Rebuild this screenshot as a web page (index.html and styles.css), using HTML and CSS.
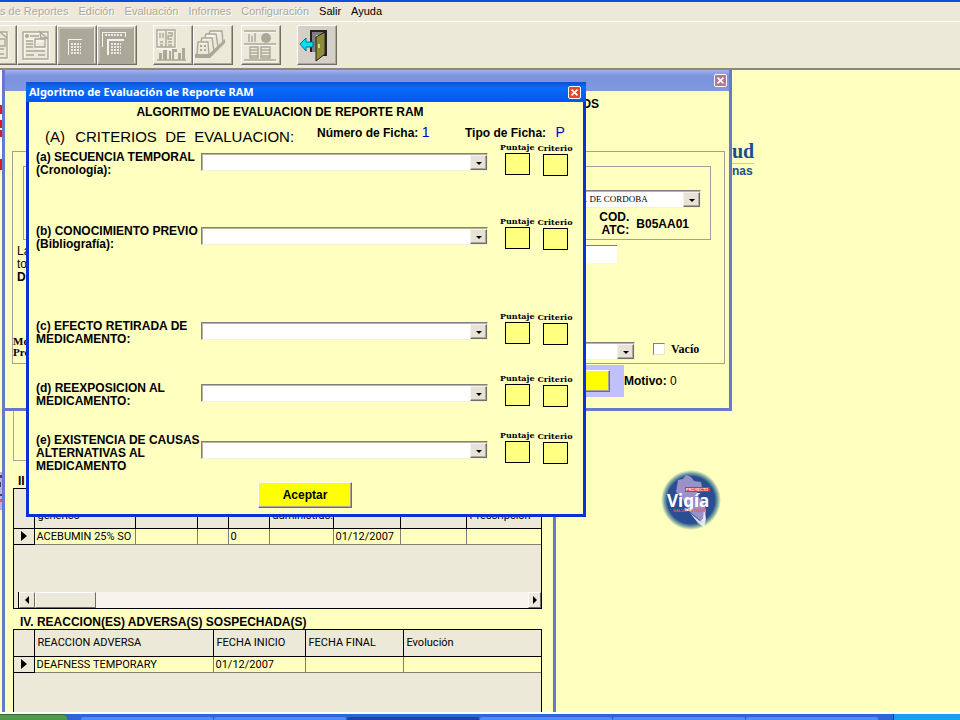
FILE: index.html
```
<!DOCTYPE html>
<html lang="es">
<head>
    <meta charset="UTF-8">
    <meta name="viewport" content="width=device-width, initial-scale=1.0">
    <title>Algoritmo de Evaluación de Reporte RAM</title>
    <link rel="stylesheet" href="styles.css">
</head>
<body>
    <nav class="menubar">
        <button disabled>s de Reportes</button>
        <button disabled>Edición</button>
        <button disabled>Evaluación</button>
        <button disabled>Informes</button>
        <button disabled>Configuración</button>
        <button>Salir</button>
        <button>Ayuda</button>
    </nav>

    <div class="toolbar">
        <button class="tool tool-cut" aria-label="Reporte" disabled>
            <svg viewBox="0 0 36 36"><path class="hi" d="M5 6h25v26h-25z"/><path class="lo" d="M4 5h25v26h-25zM7 8h12M22 5l7 6M7 14h8M7 18h8M7 22h19M7 27h19M19 12h8v7h-8z"/></svg>
        </button>
        <button class="tool" aria-label="Nuevo reporte" disabled>
            <svg viewBox="0 0 36 36"><path class="hi" d="M6 6h25v27h-25zM8 12h9M18 14h10v7h-10z"/><path class="lo" d="M5 5h25v27h-25zM12 9h9M22 5l7 6h-6zM8 14h7M8 17h7M8 20h7M8 24h19M8 28h8M20 28h7M17 12h10v8h-10z"/><circle class="fill" cx="9" cy="9" r="2"/></svg>
        </button>
        <button class="tool tool-dark" aria-label="Evaluar" disabled>
            <svg viewBox="0 0 36 36"><path class="edge" d="M1 35v-34h34"/><path class="light" d="M10 28v-16h14v1h-13v15z"/><path class="dots" d="M13 17h10M13 20h10M13 23h10M13 26h10"/></svg>
        </button>
        <button class="tool tool-dark" aria-label="Evaluar varios" disabled>
            <svg viewBox="0 0 36 36"><path class="edge" d="M1 35v-34h34"/><path class="light" d="M4 20v-15h24v5h-1v-4h-22v14zM9 28v-16h17v2h-15v14z"/><path class="dots" d="M7 8h18M13 17h10M13 20h10M13 23h10M13 26h10"/></svg>
        </button>
        <button class="tool tool-group" aria-label="Estadísticas" disabled>
            <svg viewBox="0 0 36 36"><path class="hi" d="M4 4h18v18h-18z"/><path class="lo" d="M3 3h18v17h-18zM12 4v16M6 6v5M9 6v5M14 6h4v3h-4v3h4M6 15h3M14 15h4M6 18h3M14 18h4M3 33h29"/><path class="fill" d="M5 26h3v7h-3zM9 23h4v10h-4zM15 24h2v9h-2zM18 22h5v3h-3v8h-2zM24 26h3v7h-3zM28 21h3v12h-3z"/></svg>
        </button>
        <button class="tool" aria-label="Fichero" disabled>
            <svg viewBox="0 0 36 36"><path class="hi" d="M5 16h10v13M8 12h10M12 9h10M16 6h10"/><path class="lo" d="M3 28l1-13h10l1 13M7 14l1-3h10l2 13M11 10l1-3h10l2 13M15 7l1-3h12l1 12"/><path class="fill" d="M6 18h2v2h-2zM10 18h2v2h-2zM6 22h2v2h-2zM10 22h2v2h-2zM1 27h14l16-15v4l-15 15h-15z"/></svg>
        </button>
        <button class="tool tool-single" aria-label="Informe" disabled>
            <svg viewBox="0 0 36 36"><path class="hi" d="M2 5h32M2 18h32M2 34h32"/><path class="lo" d="M2 4h32M2 17h32M2 33h32M7 7v8M10 9v6M13 6v9M8 20h8v11h-8zM19 20h9v11h-9zM8 23h8M8 26h8M8 29h8M19 23h9M19 26h9M19 29h9"/><circle class="fill" cx="24" cy="11" r="5"/></svg>
        </button>
        <button class="tool tool-exit" aria-label="Salir">
            <svg viewBox="0 0 36 36"><path fill="#222" d="M12 3h17v26h-7v-3h4v-19h-9v18h-5z"/><path fill="#808080" d="M14 5h11v3h-7v17h-4z"/><path fill="#8c8c3a" stroke="#222" d="M18 10l9-5v22l-9 7z"/><path fill="#d8d870" d="M20 17h2v4h-2z"/><path fill="#00e0f0" stroke="#007088" d="M2 17l6-6v4h7v5h-7v4z"/></svg>
        </button>
    </div>

    <main class="desktop">
        <svg class="edge-art" viewBox="0 0 3 440"><path fill="#fff" d="M0 0h3v101h-3z"/><path fill="#c22" d="M0 35h2v9h-2zM0 50h2v8h-2zM0 60h2v7h-2zM0 89h2v11h-2z"/><path fill="#b9b4dc" d="M0 402h2v38h-2z"/><path fill="#445" d="M0 405h2v3h-2zM0 412h1v5h-1zM0 424h2v2h-2z"/><path fill="#d57" d="M0 429h2v3h-2z"/></svg>

        <div class="brand">
            <div class="brand-name">ud</div>
            <div class="brand-sub">nas</div>
        </div>

        <svg class="vigia" viewBox="0 0 60 60" role="img" aria-label="Proyecto Vigía">
            <defs>
                <radialGradient id="halo">
                    <stop offset="0.78" stop-color="#26508a"/>
                    <stop offset="0.88" stop-color="#6f9a9e"/>
                    <stop offset="1" stop-color="#ffffc0"/>
                </radialGradient>
            </defs>
            <circle cx="30" cy="30" r="30" fill="url(#halo)"/>
            <circle cx="30" cy="30" r="24" fill="#2c4c94"/>
            <path fill="#9a90cc" d="M17 10l5-1 3-4 5 2 3 4 7 1 1 5-5 4 2 7 5 3 2 10-1 11-5-2-10-8-7-12-7-8 1-6z"/>
            <path fill="#fff" d="M29 43l10 8 3-2 1-10 2 10-2 8-6-4z" opacity="0.8"/>
            <rect x="24" y="17" width="25" height="5" fill="#e03028"/>
            <text x="25" y="21" class="vigia-small" fill="#fff">PROYECTO</text>
            <text x="6" y="37" class="vigia-name">Vigía</text>
            <text x="12" y="42" class="vigia-small" fill="#ff5040">SALUD Y VISIÓN</text>
        </svg>

        <section class="window report">
            <div class="report-box"></div>
            <h2 class="section-title">II</h2>
            <div class="grid-panel grid-drugs">
                <table>
                    <colgroup><col class="w-mark"><col class="w-name"><col class="w-62"><col class="w-31"><col class="w-41"><col class="w-64"><col class="w-67"><col class="w-66"><col></colgroup>
                    <thead>
                        <tr><th></th><th>genérico</th><th></th><th></th><th></th><th>adminístrac.</th><th></th><th></th><th>Prescripción</th></tr>
                    </thead>
                    <tbody>
                        <tr><td class="mark"><span class="tri"></span></td><td>ACEBUMIN 25% SO</td><td></td><td></td><td>0</td><td></td><td>01/12/2007</td><td></td><td></td></tr>
                    </tbody>
                </table>
                <div class="scrollbar">
                    <button class="scroll-btn" aria-label="Izquierda"><span class="tri tri-left"></span></button>
                    <div class="scroll-thumb"></div>
                    <button class="scroll-btn scroll-end" aria-label="Derecha"><span class="tri tri-small"></span></button>
                </div>
            </div>
            <h2 class="section-title title-reactions">IV. REACCION(ES) ADVERSA(S) SOSPECHADA(S)</h2>
            <div class="grid-panel grid-reactions">
                <table>
                    <colgroup><col class="w-mark"><col class="w-reaction"><col class="w-92"><col class="w-98"><col></colgroup>
                    <thead>
                        <tr><th></th><th>REACCION ADVERSA</th><th>FECHA INICIO</th><th>FECHA FINAL</th><th>Evolución</th></tr>
                    </thead>
                    <tbody>
                        <tr><td class="mark"><span class="tri"></span></td><td>DEAFNESS TEMPORARY</td><td>01/12/2007</td><td></td><td></td></tr>
                    </tbody>
                </table>
            </div>
        </section>

        <section class="window causality">
            <header class="titlebar">
                <button class="close" aria-label="Cerrar"><svg viewBox="0 0 13 13"><path d="M3 3l7 7M10 3l-7 7"/></svg></button>
            </header>
            <h2 class="causality-title">OS</h2>
            <div class="frame">
                <div class="inner-frame">
                    <div class="combo combo-lab">
                        <select aria-label="Laboratorio"><option>. DE CORDOBA</option></select>
                        <span class="combo-arrow"></span>
                    </div>
                    <div class="atc">
                        <span class="atc-label">COD.<br>ATC:</span>
                        <b>B05AA01</b>
                    </div>
                </div>
                <div class="took">
                    <label for="took">La<br>to<br><b>D</b></label>
                    <input type="text" id="took">
                </div>
                <div class="reason">
                    <label class="serif" for="reason">Mo<br>Pre</label>
                    <div class="combo">
                        <select id="reason"><option></option></select>
                        <span class="combo-arrow"></span>
                    </div>
                    <input type="checkbox" id="empty">
                    <label class="serif empty-label" for="empty">Vacío</label>
                </div>
            </div>
            <div class="actions">
                <div class="actions-bar"><button class="btn" aria-label="Algoritmo"></button></div>
                <div><b>Motivo:</b> 0</div>
            </div>
        </section>

        <section class="window dialog">
            <header class="titlebar">
                <span>Algoritmo de Evaluación de Reporte RAM</span>
                <button class="close" aria-label="Cerrar"><svg viewBox="0 0 13 13"><path d="M3 3l7 7M10 3l-7 7"/></svg></button>
            </header>
            <h1>ALGORITMO DE EVALUACION DE REPORTE RAM</h1>
            <div class="criteria-head">
                <h2><span>(A)</span> CRITERIOS&nbsp; DE&nbsp; EVALUACION:</h2>
                <div class="field">Número de Ficha: <span class="value">1</span></div>
                <div class="field">Tipo de Ficha: <span class="value value-type">P</span></div>
            </div>

            <div class="criterion row-a">
                <label class="question" for="crit-a">(a) SECUENCIA TEMPORAL (Cronología):</label>
                <div class="combo"><select id="crit-a"><option></option></select><span class="combo-arrow"></span></div>
                <label class="score">Puntaje<input type="text" readonly></label>
                <label class="score score-crit">Criterio<input type="text" readonly></label>
            </div>
            <div class="criterion row-b">
                <label class="question" for="crit-b">(b) CONOCIMIENTO PREVIO (Bibliografía):</label>
                <div class="combo"><select id="crit-b"><option></option></select><span class="combo-arrow"></span></div>
                <label class="score">Puntaje<input type="text" readonly></label>
                <label class="score score-crit">Criterio<input type="text" readonly></label>
            </div>
            <div class="criterion row-c">
                <label class="question" for="crit-c">(c) EFECTO RETIRADA DE MEDICAMENTO:</label>
                <div class="combo"><select id="crit-c"><option></option></select><span class="combo-arrow"></span></div>
                <label class="score">Puntaje<input type="text" readonly></label>
                <label class="score score-crit">Criterio<input type="text" readonly></label>
            </div>
            <div class="criterion row-d">
                <label class="question" for="crit-d">(d) REEXPOSICION AL MEDICAMENTO:</label>
                <div class="combo"><select id="crit-d"><option></option></select><span class="combo-arrow"></span></div>
                <label class="score">Puntaje<input type="text" readonly></label>
                <label class="score score-crit">Criterio<input type="text" readonly></label>
            </div>
            <div class="criterion row-e">
                <label class="question" for="crit-e">(e) EXISTENCIA DE CAUSAS ALTERNATIVAS AL MEDICAMENTO</label>
                <div class="combo"><select id="crit-e"><option></option></select><span class="combo-arrow"></span></div>
                <label class="score">Puntaje<input type="text" readonly></label>
                <label class="score score-crit">Criterio<input type="text" readonly></label>
            </div>

            <div class="dialog-foot"><button class="btn">Aceptar</button></div>
        </section>
    </main>

    <footer class="taskbar">
        <div class="start"></div>
        <div class="tasks">
            <div class="task"></div>
            <div class="task"></div>
            <div class="task task-active"></div>
            <div class="task"></div>
            <div class="task"></div>
            <div class="task"></div>
        </div>
        <div class="tray"></div>
    </footer>
</body>
</html>
```

FILE: styles.css
```
* {
    box-sizing: border-box;
}
body {
    margin: 0;
    height: 100vh;
    display: flex;
    flex-direction: column;
    overflow: hidden;
    background: #ffffc0;
    color: #000;
    font-family: "Liberation Sans", Arial, sans-serif;
    font-size: 12px;
    line-height: 13px;
}
h1, h2 {
    margin: 0;
    font-size: 12px;
}
button, input, select {
    margin: 0;
    padding: 0;
    border: none;
    border-radius: 0;
    font: inherit;
    color: inherit;
}

/* menu and toolbar */
.menubar {
    display: flex;
    gap: 10px;
    height: 22px;
    border-top: 2px solid #0a50d8;
    border-bottom: 1px solid #fff;
    background: #ece9d8;
    font-size: 11px;
}
.menubar button {
    background: none;
    white-space: nowrap;
}
.menubar button:disabled {
    color: #aca899;
    text-shadow: 1px 1px #fff;
}
.toolbar {
    display: flex;
    height: 48px;
    padding-top: 3px;
    background: #ece9d8;
    border-bottom: 2px solid #8c887c;
    overflow: hidden;
}
.tool {
    flex: none;
    width: 40px;
    height: 40px;
    background: #ece9d8;
    border: 1px solid;
    border-color: #fff #716f64 #716f64 #fff;
    box-shadow: inset -1px -1px #aca899;
}
.tool svg {
    display: block;
    width: 36px;
    height: 36px;
}
.tool-cut {
    margin-left: -23px;
}
.tool-dark svg {
    background: #aca899;
}
.tool-group {
    margin-left: 16px;
}
.tool-single {
    margin-left: 8px;
}
.tool-exit {
    margin-left: 16px;
    background: #d4d0c8;
}
.lo {
    fill: none;
    stroke: #aca899;
    stroke-width: 1.4;
}
.hi {
    fill: none;
    stroke: #fff;
}
.edge {
    fill: none;
    stroke: #dcd8c8;
}
.fill {
    fill: #aca899;
}
.light {
    fill: #f6f4ea;
}
.dots {
    fill: none;
    stroke: #fff;
    stroke-width: 1.5;
    stroke-dasharray: 2 1;
}

/* desktop */
.desktop {
    position: relative;
    flex: 1;
    overflow: hidden;
    border-bottom: 2px solid #fff;
}
.edge-art {
    position: absolute;
    left: 0;
    top: 0;
    width: 3px;
    height: 440px;
}
.brand {
    position: absolute;
    left: 732px;
    top: 69px;
    color: #1c4c90;
}
.brand-name {
    border-bottom: 1px solid #c8c8a8;
    font: bold 20px/24px "Liberation Serif", serif;
}
.brand-sub {
    font: bold 12px/14px "Liberation Sans", sans-serif;
}
.vigia {
    position: absolute;
    left: 661px;
    top: 400px;
    width: 60px;
    height: 60px;
}
.vigia-small {
    font: bold 4px "Liberation Sans", sans-serif;
}
.vigia-name {
    font: bold 17px "Noto Sans", sans-serif;
    fill: #fff;
}
.window {
    position: absolute;
    background: #ffffc0;
    border: 3px solid #6878cc;
}
.titlebar {
    display: flex;
    align-items: center;
    justify-content: space-between;
}
.close {
    width: 13px;
    height: 13px;
    margin-left: auto;
    border: 1px solid #fff;
    border-radius: 2px;
    background: #e0482c;
}
.close svg {
    display: block;
    width: 11px;
    height: 11px;
    fill: none;
    stroke: #fff;
    stroke-width: 2;
}

/* shared controls */
.combo {
    position: relative;
    height: 18px;
    border: 1px solid;
    border-color: #808080 #f4f1d8 #f4f1d8 #808080;
    box-shadow: inset 1px 1px #b8b5a8;
    background: #fff;
}
.combo select {
    display: block;
    width: 100%;
    height: 16px;
    appearance: none;
    background: none;
}
.combo-arrow {
    position: absolute;
    right: 0;
    top: 1px;
    width: 17px;
    height: 15px;
    background: #e6e3d6;
    border: 1px solid;
    border-color: #f4f2e8 #716f64 #716f64 #f4f2e8;
    box-shadow: inset -1px -1px #aca899;
    pointer-events: none;
}
.combo-arrow::after {
    content: "";
    display: block;
    width: 0;
    margin: 6px auto 0;
    border: solid transparent;
    border-width: 3px 3px 0;
    border-top-color: #000;
}
.btn {
    background: #ff0;
    border: 1px solid;
    border-color: #fff #716f64 #716f64 #fff;
    box-shadow: inset -1px -1px #aca899;
    font-weight: bold;
}
.serif {
    font-family: "Liberation Serif", serif;
    font-weight: bold;
}

/* report window */
.report {
    left: 2px;
    top: 0;
    width: 554px;
    bottom: 0;
    display: flex;
    flex-direction: column;
    border-top: none;
    border-bottom: none;
    padding: 0 11px 0 8px;
}
.report-box {
    height: 391px;
    border: 1px solid #a8a8a0;
}
.section-title {
    padding: 14px 0 0 5px;
}
.title-reactions {
    padding: 7px 0 0 7px;
}
.grid-panel {
    display: flex;
    flex-direction: column;
    justify-content: space-between;
    border: 1px solid #000;
    background: #ece9d8;
}
.grid-drugs {
    height: 121px;
}
.grid-reactions {
    flex: 1;
    border-bottom: none;
}
.grid-panel table {
    width: 100%;
    table-layout: fixed;
    border-collapse: collapse;
    font-family: Roboto, sans-serif;
    font-size: 11px;
}
.grid-panel th {
    height: 26px;
    padding: 0 3px;
    border-right: 1px solid #000;
    border-bottom: 1px solid #000;
    font-weight: normal;
    text-align: left;
    white-space: nowrap;
}
.grid-drugs th {
    height: 39px;
    padding-top: 14px;
}
.grid-panel td {
    height: 16px;
    padding: 0 2px;
    border-right: 1px solid #808078;
    border-bottom: 1px solid #808078;
    background: #ffffc0;
    white-space: nowrap;
}
.grid-panel th:last-child, .grid-panel td:last-child {
    border-right: none;
}
.grid-panel td.mark {
    padding-left: 7px;
    background: #ece9d8;
    border-color: #000;
}
.w-mark { width: 20px; }
.w-name { width: 101px; }
.w-31 { width: 31px; }
.w-41 { width: 41px; }
.w-62 { width: 62px; }
.w-64 { width: 64px; }
.w-66 { width: 66px; }
.w-67 { width: 67px; }
.w-92 { width: 92px; }
.w-98 { width: 98px; }
.w-reaction { width: 179px; }
.tri {
    display: block;
    width: 0;
    border: solid transparent;
    border-width: 5px 0 5px 6px;
    border-left-color: #000;
}
.tri-small {
    border-width: 4px 0 4px 4px;
    margin: auto;
}
.tri-left {
    border-width: 4px 4px 4px 0;
    border-right-color: #000;
    margin: auto;
}
.scrollbar {
    display: flex;
    height: 16px;
    margin-left: 4px;
    border-left: 1px solid #000;
    background: #f6f4ec;
}
.scroll-btn, .scroll-thumb {
    width: 16px;
    background: #ece9d8;
    border: 1px solid;
    border-color: #fff #716f64 #716f64 #fff;
}
.scroll-thumb {
    width: 61px;
}
.scroll-end {
    width: 13px;
    margin-left: auto;
}

/* causality window */
.causality {
    left: 2px;
    top: 0;
    width: 730px;
    height: 341px;
    border-top: none;
    padding: 0 4px 0 7px;
}
.causality .titlebar {
    height: 21px;
    margin: 0 -4px 0 -7px;
    padding-right: 2px;
    background: linear-gradient(#9db4ec, #7b92dc 30%, #7f9ae0);
}
.causality .close {
    background: #b07890;
}
.causality-title {
    padding: 7px 126px 0 0;
    text-align: right;
}
.frame {
    height: 213px;
    margin-top: 40px;
    border: 1px solid #a0a098;
}
.inner-frame {
    height: 74px;
    margin: 14px 13px 0 10px;
    padding: 23px 9px 0 0;
    border: 1px solid #a0a098;
}
.combo-lab {
    width: 160px;
    margin-left: auto;
    font-family: "Liberation Serif", serif;
    font-size: 9px;
}
.combo-lab select {
    padding-left: 43px;
}
.atc {
    display: flex;
    justify-content: flex-end;
    align-items: center;
    gap: 7px;
    padding: 3px 12px 0 0;
}
.atc-label {
    font-weight: bold;
    text-align: right;
}
.took {
    display: flex;
    justify-content: space-between;
    height: 91px;
    padding: 5px 107px 0 4px;
}
.took input {
    width: 100px;
    height: 18px;
    background: #fff;
    border-top: 1px solid #808080;
}
.reason {
    display: flex;
    align-items: flex-end;
}
.reason label:first-child {
    padding-bottom: 2px;
    font-size: 11px;
    line-height: 11px;
}
.reason .combo {
    width: 100px;
    margin-left: auto;
    margin-top: 11px;
}
.reason input {
    appearance: none;
    width: 12px;
    height: 12px;
    margin: 0 0 5px 18px;
    background: #fff;
    border: 1px solid;
    border-color: #808080 #e8e6d0 #e8e6d0 #808080;
}
.empty-label {
    width: 53px;
    margin: 0 0 4px 6px;
}
.actions {
    display: flex;
    align-items: center;
    padding-top: 1px;
}
.actions-bar {
    width: 560px;
    height: 32px;
    margin-left: 52px;
    padding: 5px 14px 5px 0;
    background: #c0c0ff;
    text-align: right;
}
.actions-bar .btn {
    width: 94px;
    height: 22px;
}

/* evaluation dialog */
.dialog {
    left: 26px;
    top: 12px;
    width: 560px;
    border-color: #0831d9;
    border-top: none;
}
.dialog .titlebar {
    height: 20px;
    margin: 0 -3px;
    padding: 0 5px 0 3px;
    background: linear-gradient(#0a50d8, #0a6cf8 30%, #0058ee);
    color: #fff;
    font: bold 11px/20px "Noto Sans", sans-serif;
}
.dialog h1 {
    padding: 4px 0 0;
    margin-right: 52px;
    text-align: center;
}
.criteria-head {
    display: grid;
    grid-template-columns: 272px 148px 1fr;
    align-items: center;
    height: 24px;
    padding-left: 16px;
}
.criteria-head h2 {
    padding-top: 10px;
    font-size: 15px;
    font-weight: normal;
    white-space: nowrap;
}
.criteria-head h2 span {
    margin-right: 6px;
}
.field {
    padding-top: 4px;
    font-weight: bold;
}
.value {
    color: #00c;
    font-size: 14px;
    font-weight: normal;
}
.value-type {
    margin-left: 6px;
}
.criterion {
    display: grid;
    grid-template-columns: 165px 287px 34px 38px;
    justify-content: start;
    align-items: start;
    padding-left: 7px;
    height: 62px;
}
.question {
    padding-top: 8px;
    font-weight: bold;
}
.criterion .combo {
    margin-top: 10px;
}
.score {
    width: 34px;
    margin-left: 12px;
    font: bold 8px/9px "DejaVu Serif", serif;
    text-align: center;
}
.score-crit {
    width: 38px;
    margin-left: 14px;
    padding-top: 1px;
}
.score input {
    display: block;
    width: 25px;
    height: 22px;
    margin: 1px auto 0;
    background: #ffff80;
    border: 1px solid #000;
}
.row-a {
    height: 74px;
}
.row-b {
    height: 95px;
}
.row-d {
    height: 57px;
}
.row-e {
    height: 51px;
}
.row-e .question {
    padding-top: 3px;
}
.dialog-foot {
    display: flex;
    justify-content: center;
    padding: 0 2px 6px 0;
}
.dialog-foot .btn {
    width: 94px;
    height: 26px;
}

/* taskbar */
.taskbar {
    display: flex;
    height: 6px;
    background: #2c66d8;
}
.start {
    width: 67px;
    background: #4f9a4c;
    border-top: 1px solid #2f7030;
    border-top-right-radius: 4px;
}
.tasks {
    flex: 1;
    display: flex;
    gap: 1px;
    padding: 3px 15px 0 14px;
}
.task {
    flex: 1;
    background: #4a90f8;
    border-radius: 2px 2px 0 0;
}
.task-active {
    background: #1a48a0;
}
.tray {
    width: 67px;
    background: #18a0ee;
    border-left: 1px solid #0a3c90;
}
```
